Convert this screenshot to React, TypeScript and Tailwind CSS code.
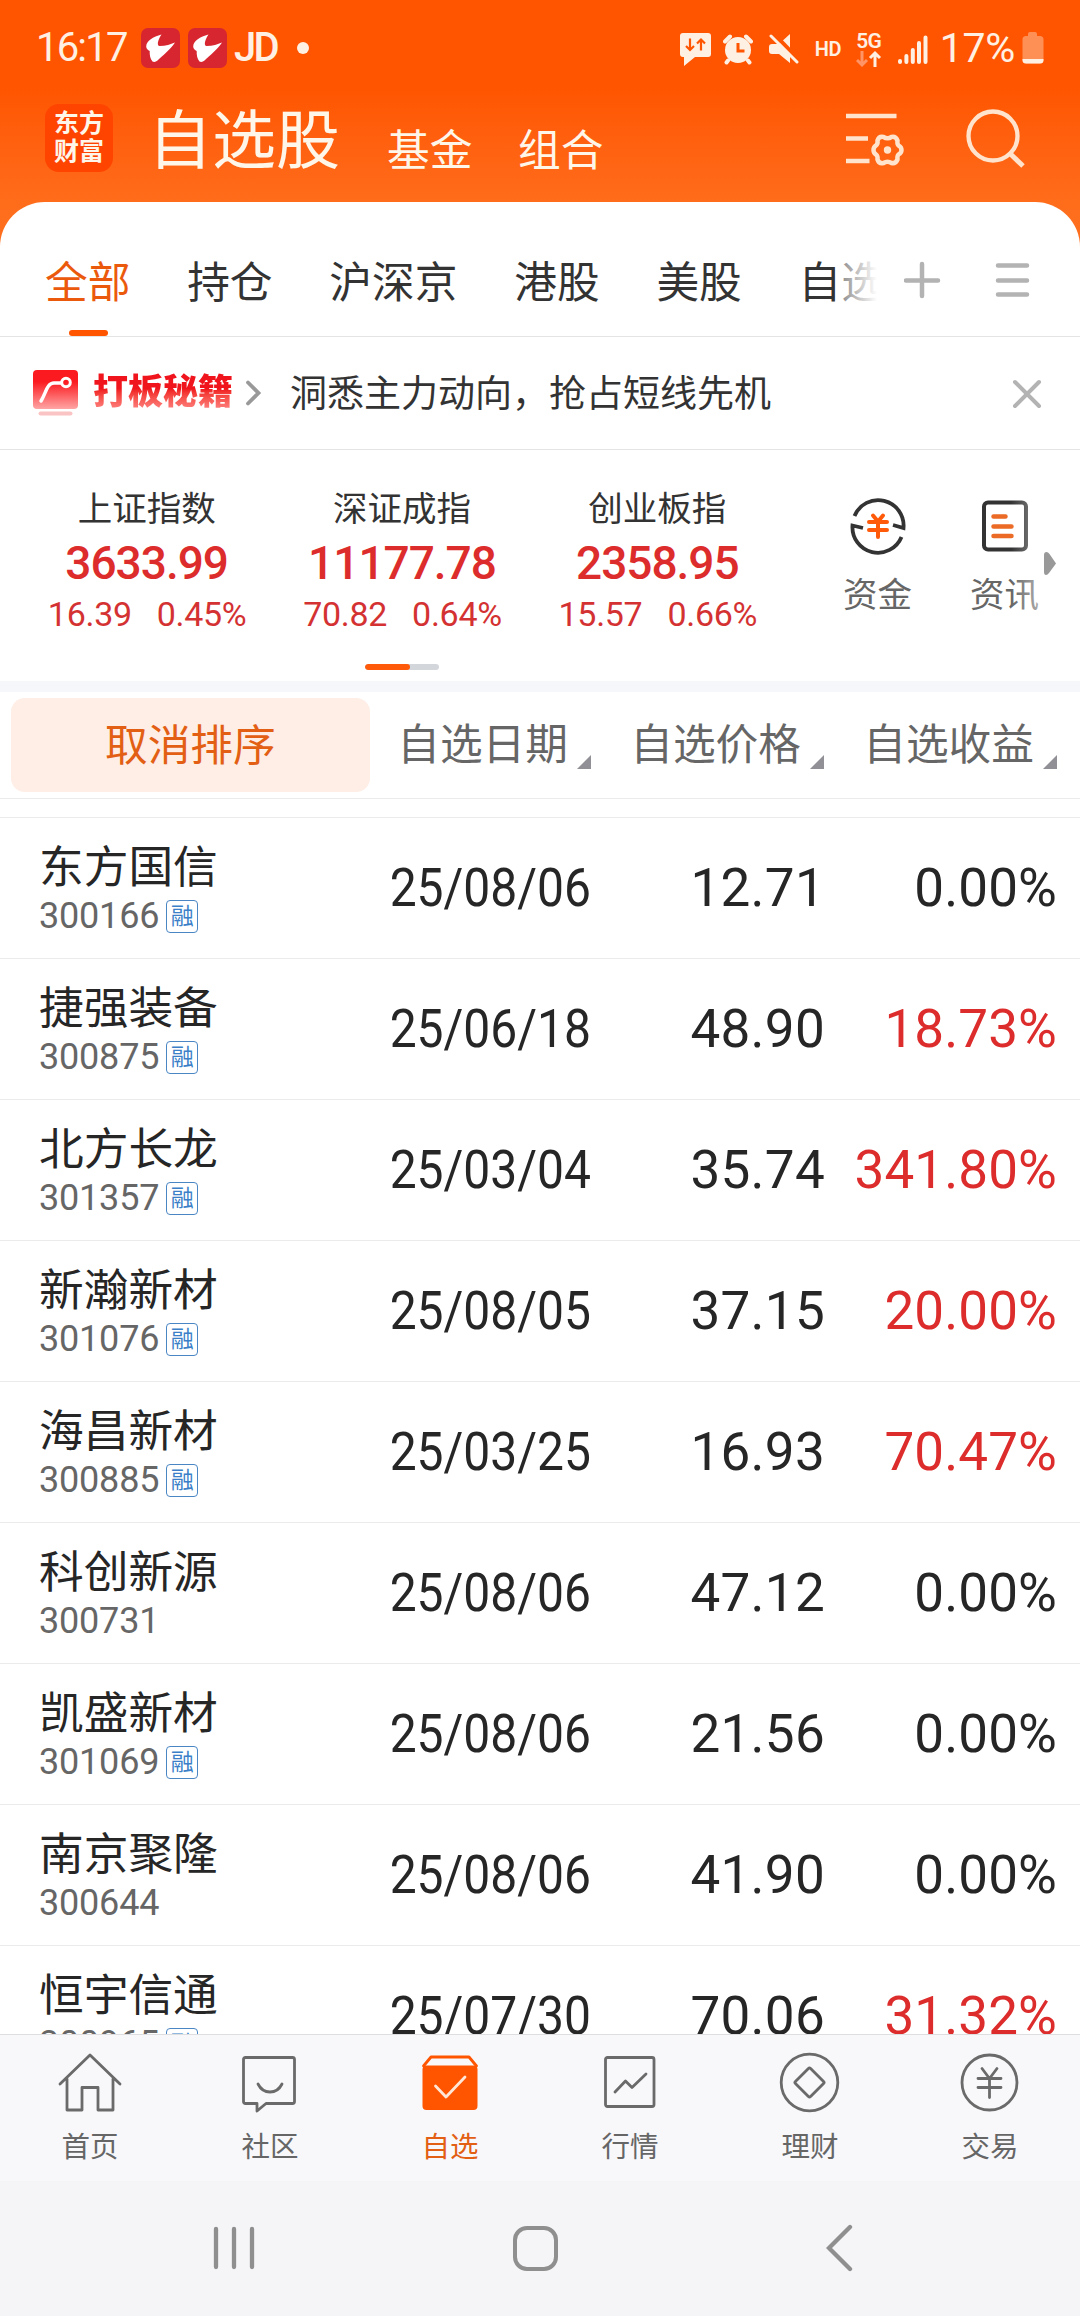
import type { ReactNode } from "react";

const CREAM = "#fff0e4";

type Stock = {
  name: string;
  code: string;
  margin: boolean;
  date: string;
  price: string;
  gain: string;
};

const stocks: Stock[] = [
  { name: "东方国信", code: "300166", margin: true, date: "25/08/06", price: "12.71", gain: "0.00%" },
  { name: "捷强装备", code: "300875", margin: true, date: "25/06/18", price: "48.90", gain: "18.73%" },
  { name: "北方长龙", code: "301357", margin: true, date: "25/03/04", price: "35.74", gain: "341.80%" },
  { name: "新瀚新材", code: "301076", margin: true, date: "25/08/05", price: "37.15", gain: "20.00%" },
  { name: "海昌新材", code: "300885", margin: true, date: "25/03/25", price: "16.93", gain: "70.47%" },
  { name: "科创新源", code: "300731", margin: false, date: "25/08/06", price: "47.12", gain: "0.00%" },
  { name: "凯盛新材", code: "301069", margin: true, date: "25/08/06", price: "21.56", gain: "0.00%" },
  { name: "南京聚隆", code: "300644", margin: false, date: "25/08/06", price: "41.90", gain: "0.00%" },
  { name: "恒宇信通", code: "300965", margin: true, date: "25/07/30", price: "70.06", gain: "31.32%" },
];

const indices = [
  { name: "上证指数", value: "3633.99", diff: "16.39", pct: "0.45%" },
  { name: "深证成指", value: "11177.78", diff: "70.82", pct: "0.64%" },
  { name: "创业板指", value: "2358.95", diff: "15.57", pct: "0.66%" },
];

function BrokerIcon() {
  return (
    <svg className="h-[40px] w-[39px]" viewBox="0 0 39 40">
      <rect width="39" height="40" rx="7" fill="#d7262f" />
      <path
        d="M20.5 6.5C12 9 5.500 12.500 5.200 18.500c0 2 1.800 3.500 3.500 4.500-.2 3.500.5 8 2.800 10.500 1.500.9 3.500.4 5-.9C22 27 29 22 34 14.500c-4.500 1.800-9 3.500-15.500 3.600-2.500-.6-2.300-5 2-11.600z"
        fill="#fff"
      />
    </svg>
  );
}

function StatusBar() {
  return (
    <div className="flex h-[96px] items-center pl-[36px] text-[#fff0e4]">
      <span className="w-[105px] text-[40px] leading-none tracking-[-1.800px]">16:17</span>
      <BrokerIcon />
      <div className="w-[8px]" />
      <BrokerIcon />
      <span className="ml-[7px] w-[63px] text-[40px] leading-none font-medium tracking-[-2.800px]">JD</span>
      <div className="size-[12px] rounded-full bg-[#fff0e4]" />
      <div className="ml-auto flex items-center pr-[36px]">
        <svg className="mt-[2px] h-[40px] w-[34px]" viewBox="0 0 34 40">
          <path d="M4 4h25q3 0 3 3v18q0 3-3 3H16l-11 9V28H4q-3 0-3-3V7q0-3 3-3z" fill={CREAM} />
          <g stroke="#ff5500" strokeWidth="2.200" fill="none">
            <path d="M11 9.500v11M7 17l4 4 4-4" />
            <path d="M22 21.500v-11M18 14.500l4-4 4 4" />
          </g>
        </svg>
        <svg className="mt-[2px] ml-[10px] h-[40px] w-[30px]" viewBox="0 0 30 40">
          <circle cx="15" cy="21" r="13" fill={CREAM} />
          <path d="M2 12.500l5-5M28 12.500l-5-5M5 31.500l-1.500 2M25 31.500l1.500 2" stroke={CREAM} strokeWidth="4" strokeLinecap="round" />
          <path d="M15 14v8h6.500" stroke="#ff5500" strokeWidth="3" fill="none" />
        </svg>
        <svg className="mt-[2px] ml-[15px] h-[40px] w-[31px]" viewBox="0 0 31 40">
          <path d="M4 15h7L22 5v29l-11-9H4q-3 0-3-3v-4q0-3 3-3z" fill={CREAM} />
          <path d="M6 5l25 26" stroke="#ff5500" strokeWidth="4" />
          <path d="M3 7l26 26" stroke={CREAM} strokeWidth="3" strokeLinecap="round" />
        </svg>
        <span className="mt-[2px] ml-[16px] w-[41px] text-[20px] leading-none font-semibold tracking-[-0.500px]">HD</span>
        <div className="mt-[3px] flex w-[26px] flex-col items-center">
          <span className="text-[21px] leading-[18px] font-semibold tracking-[-0.500px]">5G</span>
          <svg className="h-[18px] w-[26px]" viewBox="0 0 26 18">
            <path d="M6 1v14M1 10l5 5 5-5" stroke="#ff9566" strokeWidth="3" fill="none" />
            <path d="M19 17V3M14 8l5-5 5 5" stroke={CREAM} strokeWidth="3" fill="none" />
          </svg>
        </div>
        <svg className="mt-[4px] ml-[16px] h-[32px] w-[30px]" viewBox="0 0 30 32">
          <g stroke={CREAM} strokeWidth="4" strokeLinecap="round">
            <path d="M2 27v1M8.400 22v6M14.800 16v12M21 9v19M27.500 3.500v24.500" />
          </g>
        </svg>
        <span className="ml-[12px] text-[41px] leading-none tracking-[-0.300px]">17%</span>
        <svg className="ml-[7px] h-[34px] w-[22px]" viewBox="0 0 22 34">
          <path d="M6 5V3q0-2 2-2h5q2 0 2 2v2h3q3.500 0 3.500 3.500V29q0 3.500-3.500 3.500H4Q.5 32.500.5 29V8.500Q.5 5 4 5z" fill="#ff9055" />
          <path d="M.5 28h21v1q0 3.500-3.500 3.500H4Q.5 32.500.5 29z" fill={CREAM} />
        </svg>
      </div>
    </div>
  );
}

function TitleBar() {
  return (
    <div className="flex h-[106px] items-start text-[#fff6ea]">
      <div className="mt-[8px] ml-[45px] flex h-[68px] w-[68px] flex-col items-center justify-center rounded-[14px] bg-[#ff4400] text-[25px] leading-[28px] font-bold">
        <span>东方</span>
        <span>财富</span>
      </div>
      <span className="mt-[14px] ml-[35px] w-[239px] text-[64px] leading-none">自选股</span>
      <span className="mt-[34px] w-[131px] text-[42.700px] leading-none">基金</span>
      <span className="mt-[34px] text-[42.700px] leading-none">组合</span>
      <svg className="mt-[14px] mr-[1px] ml-auto h-[60px] w-[62px]" viewBox="0 0 62 60">
        <g stroke="#ffe3cc" strokeWidth="4.500" fill="none">
          <path d="M1 6h50.500M1 28.500h22M1 51h23.500" />
          <path
            strokeLinejoin="round"
            d="M56.500 40Q56.500 43 53.500 44.500Q52 46 52.500 49.500Q50.500 54 46.500 53Q42.500 50.500 38.500 53Q34 54 32.500 49.500Q33 46 31 44.500Q28.500 43 28.500 40Q28.500 37 31 35.500Q33 34 32.500 30.500Q34 26 38.500 27Q42.500 29.500 46.500 27Q50.500 26 52.500 30.500Q52 34 53.500 35.500Q56.500 37 56.500 40Z"
          />
        </g>
        <circle cx="42.500" cy="40" r="3.700" fill="#ffe3cc" />
      </svg>
      <svg className="mt-[10px] mr-[53px] ml-[57px] h-[64px] w-[62px]" viewBox="0 0 62 64">
        <circle cx="28" cy="30" r="24.500" fill="none" stroke="#ffe3cc" strokeWidth="4.300" />
        <path d="M45 47.500L58 60" stroke="#ffe3cc" strokeWidth="5" />
      </svg>
    </div>
  );
}

function GroupTabs() {
  return (
    <div className="flex h-[135px] items-start border-b border-[#e4e4e4] text-[42.700px] leading-none text-[#333]">
      <div className="relative mt-[30px] flex w-[877px] gap-[56.800px] overflow-hidden pt-[30px] pb-[32px] pl-[45px] whitespace-nowrap">
        <div className="relative text-[#eb5a0c]">
          全部
          <div className="absolute top-[68px] left-[24px] h-[6px] w-[39px] rounded-full bg-[#ff5500]" />
        </div>
        <span>持仓</span>
        <span>沪深京</span>
        <span>港股</span>
        <span>美股</span>
        <span>自选</span>
        <div className="absolute top-[20px] right-0 h-[60px] w-[42px] bg-gradient-to-r from-white/35 to-white" />
      </div>
      <svg className="mt-[59px] ml-[27px] h-[38px] w-[37px]" viewBox="0 0 37 38">
        <path d="M2 19.500h32M18 3v32" stroke="#b3b3b3" strokeWidth="4.500" strokeLinecap="round" />
      </svg>
      <svg className="mt-[59px] ml-[54px] h-[38px] w-[36px]" viewBox="0 0 36 38">
        <path d="M3 4.500h29M3 19.500h29M3 33.500h29" stroke="#b3b3b3" strokeWidth="4.500" strokeLinecap="round" />
      </svg>
    </div>
  );
}

function Banner() {
  return (
    <div className="flex h-[113px] items-center border-b border-[#e4e4e4]">
      <svg className="ml-[33px] h-[48px] w-[46px]" viewBox="0 0 46 48">
        <defs>
          <linearGradient id="bannerIcon" x1="0" y1="0" x2="0" y2="1">
            <stop offset="0.300" stopColor="#fb1a1f" />
            <stop offset="1" stopColor="#ffa5a5" />
          </linearGradient>
        </defs>
        <rect y="1" width="45" height="39" rx="4" fill="url(#bannerIcon)" />
        <path d="M8 32c5-8 6-18 13-18h7" fill="none" stroke="#fff" strokeWidth="3.500" strokeLinecap="round" />
        <circle cx="33" cy="13.500" r="4.300" fill="none" stroke="#fff" strokeWidth="3" />
        <rect x="5.500" y="42.500" width="34" height="4" rx="2" fill="#fbc4c4" />
      </svg>
      <span className="ml-[14px] bg-gradient-to-b from-[#f0141c] from-40% to-[#ff8f8f] bg-clip-text text-[35px] leading-[42px] font-black text-transparent">
        打板秘籍
      </span>
      <svg className="ml-[11px] h-[30px] w-[18px]" viewBox="0 0 18 30">
        <path d="M4 4.500l10.500 10.500L4 25.500" fill="none" stroke="#999" strokeWidth="3.800" strokeLinecap="round" />
      </svg>
      <span className="mt-[2px] ml-[28px] text-[37px] leading-none text-[#333]">洞悉主力动向，抢占短线先机</span>
      <svg className="mt-[2px] mr-[38px] ml-auto h-[30px] w-[30px]" viewBox="0 0 30 30">
        <path d="M3 3l24 24M27 3L3 27" stroke="#b3b3b3" strokeWidth="4" strokeLinecap="round" />
      </svg>
    </div>
  );
}

function IndexPanel() {
  return (
    <div className="flex h-[231px]">
      <div className="flex w-[785px] flex-col pl-[19px]">
        <div className="grid grid-cols-3">
          {indices.map((item) => (
            <div key={item.name} className="flex flex-col items-center pt-[41px]">
              <span className="text-[34.500px] leading-[36px] text-[#333]">{item.name}</span>
              <span className="mt-[12px] text-[46px] leading-[48px] font-medium tracking-[-1px] text-[#dd2c2c]">
                {item.value}
              </span>
              <div className="mt-[9px] flex gap-[25px] pl-[1px] text-[34px] leading-[36px] tracking-[-0.300px] text-[#d43232]">
                <span>{item.diff}</span>
                <span>{item.pct}</span>
              </div>
            </div>
          ))}
        </div>
        <div className="mt-[32px] ml-[346px] h-[6px] w-[74px] overflow-hidden rounded-full bg-[#d3d6db]">
          <div className="h-full w-[45px] rounded-full bg-[#ff5a0a]" />
        </div>
      </div>
      <div className="flex flex-1 pl-[58px] text-[34.500px] leading-[36px] text-[#666]">
        <div className="flex w-[69px] flex-col items-center">
          <svg className="mt-[46px] mb-[21px] h-[60px] w-[60px]" viewBox="0 0 60 60">
            <g fill="none" stroke="#333" strokeWidth="3.800">
              <path d="M6.500 20A25.500 25.500 0 0 1 55.500 32L45 29" />
              <path d="M53.500 41A25.500 25.500 0 0 1 4.500 29.500L15 32" />
            </g>
            <path d="M25 19.500l5 6 5-6M21 26h18M21 34h18M30 26v15" fill="none" stroke="#ff5a0a" strokeWidth="4" strokeLinecap="round" />
          </svg>
          资金
        </div>
        <div className="relative ml-[58px] flex w-[69px] flex-col items-center">
          <svg className="mt-[46px] mb-[21px] h-[60px] w-[60px]" viewBox="0 0 60 60">
            <rect x="9" y="6.500" width="42" height="47" rx="4" fill="none" stroke="#333" strokeWidth="4" />
            <path d="M18.500 20.500h12M18.500 30.500h18M18.500 40h18" stroke="#eb6a25" strokeWidth="4.500" strokeLinecap="round" />
          </svg>
          资讯
          <div className="absolute top-[44px] right-0 h-[120px] w-[28px] bg-gradient-to-r from-white/0 to-white/45" />
        </div>
        <svg className="mt-[101px] ml-[4px] h-[25px] w-[14px]" viewBox="0 0 14 25">
          <path d="M1 4q0-3 2.500-3 1.500 0 3 2l6.500 9.500L6 22q-1.500 2-3 2-2 0-2-3z" fill="#999" />
        </svg>
      </div>
    </div>
  );
}

function SortHeader({ children }: { children: ReactNode }) {
  return (
    <div className="flex items-start justify-end text-[42.700px] leading-none text-[#666]">
      {children}
      <svg className="mt-[31px] ml-[9px] size-[14px]" viewBox="0 0 14 14">
        <path d="M14 0v14H0z" fill="#909096" />
      </svg>
    </div>
  );
}

function TableHeader() {
  return (
    <div className="flex h-[107px] items-start border-b border-[#ebebeb] pt-[6px]">
      <div className="ml-[11px] h-[94px] w-[359px] rounded-[14px] bg-[#feeee6] pt-[27px] pl-[94px] text-[42.700px] leading-none text-[#e25f14]">
        取消排序
      </div>
      <div className="mt-[26px] w-[221px]">
        <SortHeader>自选日期</SortHeader>
      </div>
      <div className="mt-[26px] w-[233px]">
        <SortHeader>自选价格</SortHeader>
      </div>
      <div className="mt-[26px] w-[233px]">
        <SortHeader>自选收益</SortHeader>
      </div>
    </div>
  );
}

function StockRow({ stock }: { stock: Stock }) {
  const up = stock.gain !== "0.00%";
  return (
    <div className="flex h-[141px] shrink-0 border-t border-[#ebebeb] text-[53px] leading-none text-[#262626]">
      <div className="flex w-[340px] flex-col pt-[28px] pl-[39px]">
        <span className="text-[44.700px] leading-[45px]">{stock.name}</span>
        <div className="mt-[7px] flex items-center text-[36px] leading-[36px] tracking-[-0.200px] text-[#666]">
          {stock.code}
          {stock.margin && (
            <span className="ml-[7px] flex h-[33px] w-[32px] items-center justify-center rounded-[4px] border border-[#4a86c4] text-[23px] leading-none text-[#3b7fc8]">
              融
            </span>
          )}
        </div>
      </div>
      <span className="mt-[44px] w-[251px] origin-right scale-x-[0.905] text-right">{stock.date}</span>
      <span className="mt-[44px] w-[234px] text-right tracking-[0.300px]">{stock.price}</span>
      <span className={up ? "mt-[44px] w-[232px] text-right tracking-[0.100px] text-[#dd2c2c]" : "mt-[44px] w-[232px] text-right tracking-[0.100px]"}>
        {stock.gain}
      </span>
    </div>
  );
}

const tabs: { label: string; active?: boolean; icon: ReactNode }[] = [
  {
    label: "首页",
    icon: (
      <path d="M2 33L32 4l30 29M9 28v31h15V36.500h16V59h15V28" />
    ),
  },
  {
    label: "社区",
    icon: (
      <>
        <path d="M7.500 6.500h47q2 0 2 2v42q0 2-2 2H28L19 60v-7.500H7.500q-2 0-2-2v-42q0-2 2-2z" />
        <path d="M20 33q4 8 12 8t12-8" />
      </>
    ),
  },
  {
    label: "自选",
    active: true,
    icon: (
      <>
        <path d="M5.500 15L13 6h38l7.500 9" stroke="#ff5500" />
        <rect x="4.500" y="14.500" width="55" height="44.500" rx="4" fill="#ff5500" stroke="none" />
        <path d="M17.500 35L28 46l19-20" stroke="#ffe6d6" />
      </>
    ),
  },
  {
    label: "行情",
    icon: (
      <>
        <rect x="7.500" y="6.500" width="48.500" height="49" rx="2" />
        <path d="M17 41l10.500-11 6.500 6.500L48 23" />
      </>
    ),
  },
  {
    label: "理财",
    icon: (
      <>
        <circle cx="31.500" cy="31.500" r="28.300" />
        <rect x="20.800" y="20.800" width="21.400" height="21.400" rx="1.500" transform="rotate(45 31.500 31.500)" />
      </>
    ),
  },
  {
    label: "交易",
    icon: (
      <>
        <circle cx="31.500" cy="31.500" r="27.500" />
        <path d="M24 17.500l7.500 10L39 17.500M20 27.500h23M20 36.500h23M31.500 27.500v19" />
      </>
    ),
  },
];

function BottomTabs() {
  return (
    <div className="grid h-[147px] grid-cols-6 border-t border-[#dedee0] bg-[#f8f8fb]">
      {tabs.map((tab) => (
        <div
          key={tab.label}
          className={tab.active ? "flex flex-col items-center pt-[16px] text-[#e25f14]" : "flex flex-col items-center pt-[16px] text-[#666]"}
        >
          <svg
            className="h-[64px] w-[64px]"
            viewBox="0 0 64 64"
            fill="none"
            stroke="#6a6a6a"
            strokeWidth="2.800"
            strokeLinecap="round"
            strokeLinejoin="round"
          >
            {tab.icon}
          </svg>
          <span className="mt-[18px] text-[28.500px] leading-[30px]">{tab.label}</span>
        </div>
      ))}
    </div>
  );
}

function SystemNav() {
  return (
    <div className="flex h-[135px] items-center bg-[#f5f5f8] pb-[1px] pl-[213px]">
      <svg className="h-[48px] w-[42px]" viewBox="0 0 42 48" stroke="#8f8f8f" strokeWidth="4.300" strokeLinecap="round">
        <path d="M3 5v38M21 5v38M39 5v38" />
      </svg>
      <div className="ml-[258px] size-[45px] rounded-[14px] border-4 border-[#8f8f8f]" />
      <svg className="ml-[268px] h-[48px] w-[27px]" viewBox="0 0 27 48" fill="none" stroke="#8f8f8f" strokeWidth="4.300" strokeLinecap="round">
        <path d="M24 3L3 24l21 21" />
      </svg>
    </div>
  );
}

export default function App() {
  return (
    <div className="flex h-[2316px] w-[1080px] flex-col overflow-hidden bg-white font-['Roboto','Noto_Sans_CJK_SC',sans-serif]">
      <div className="h-[250px] shrink-0 bg-linear-to-b from-[#ff5500] from-35% to-[#ff6e1c] to-85%">
        <StatusBar />
        <TitleBar />
        <div className="h-[48px] rounded-t-[45px] bg-white" />
      </div>
      <div className="-mt-[48px] shrink-0">
        <GroupTabs />
        <Banner />
        <IndexPanel />
        <div className="h-[11px] bg-[#f6f7fa]" />
        <TableHeader />
      </div>
      <div className="flex flex-1 flex-col overflow-hidden pt-[18px]">
        {stocks.map((stock) => (
          <StockRow key={stock.code} stock={stock} />
        ))}
      </div>
      <div className="shrink-0">
        <BottomTabs />
        <SystemNav />
      </div>
    </div>
  );
}
